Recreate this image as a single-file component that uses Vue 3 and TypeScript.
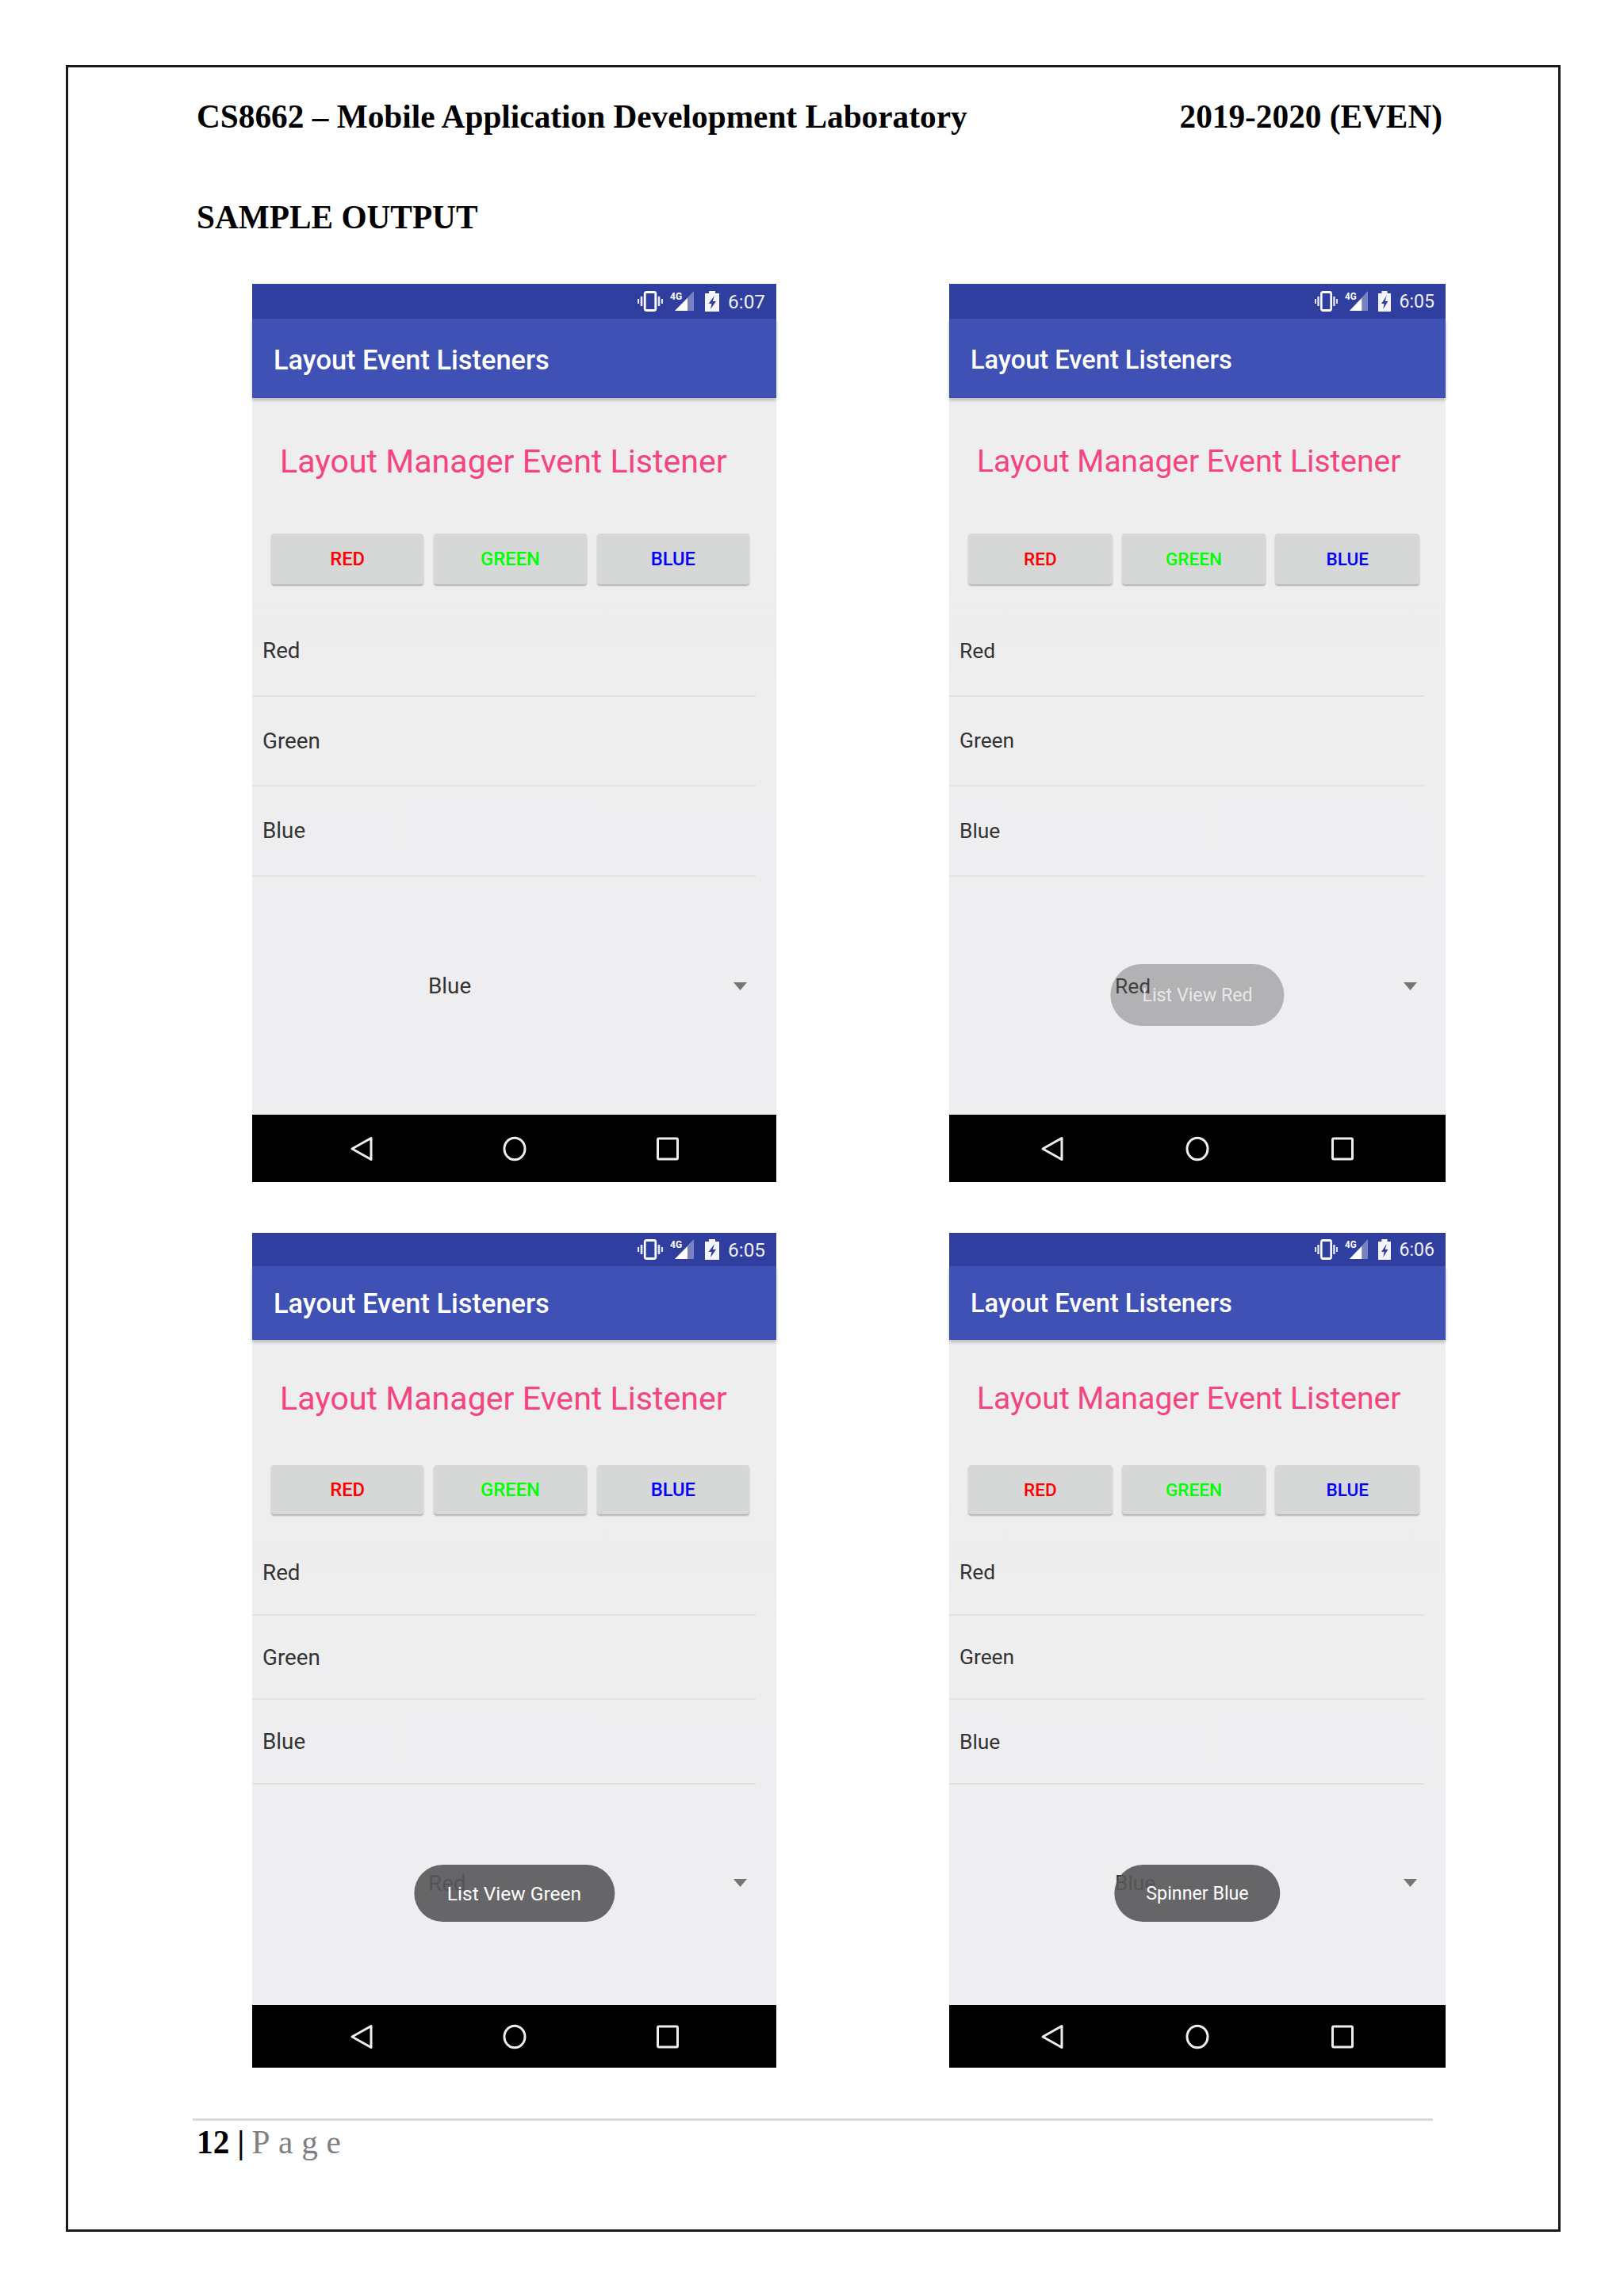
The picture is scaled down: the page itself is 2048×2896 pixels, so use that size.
<script setup lang="ts">
interface Phone {
  time: string
  wide: boolean
  tall: boolean
  spinner: string
  toast?: string
  fading?: boolean
}

const phones: Phone[] = [
  { time: '6:07', wide: true, tall: true, spinner: 'Blue' },
  { time: '6:05', wide: false, tall: true, spinner: 'Red', toast: 'List View Red', fading: true },
  { time: '6:05', wide: true, tall: false, spinner: 'Red', toast: 'List View Green' },
  { time: '6:06', wide: false, tall: false, spinner: 'Blue', toast: 'Spinner Blue' },
]
const items = ['Red', 'Green', 'Blue']
const buttons = [
  { label: 'RED', cls: 'red' },
  { label: 'GREEN', cls: 'green' },
  { label: 'BLUE', cls: 'blue' },
]
</script>

<template>
  <div class="page">
    <div class="frame">
      <header class="doc-head">
        <span>CS8662 – Mobile Application Development Laboratory</span>
        <span>2019-2020 (EVEN)</span>
      </header>
      <h2 class="sample">SAMPLE OUTPUT</h2>
      <div class="phones">
        <section
          v-for="(p, i) in phones"
          :key="i"
          class="phone"
          :class="[p.wide ? 'wide' : 'narrow', p.tall ? 'tall' : 'short']"
        >
          <div class="status">
            <svg class="ic-vib" viewBox="0 0 32 26" preserveAspectRatio="none">
              <rect x="9.2" y="1.5" width="13.6" height="23" rx="2" fill="none" stroke="#fff" stroke-width="2.8" />
              <path d="M5 7v12M27 7v12" stroke="#e8eaf6" stroke-width="2.6" fill="none" />
              <path d="M1 10v6M31 10v6" stroke="#e8eaf6" stroke-width="2.2" fill="none" />
            </svg>
            <svg class="ic-sig" viewBox="0 0 30 26" preserveAspectRatio="none">
              <polygon points="30,0 30,25 6,25" fill="#fff" fill-opacity="0.35" />
              <polygon points="6,25 22,9 22,25" fill="#fff" />
              <text x="0" y="11" class="four-g">4G</text>
            </svg>
            <svg class="ic-bat" viewBox="0 0 18 26" preserveAspectRatio="none">
              <path d="M5 0h8v3h5v23H0V3h5z" fill="#f4f5fb" />
              <path d="M12 6 4.5 16h4L7 23l7-10h-4.2z" fill="#303f9f" />
            </svg>
            <span class="time">{{ p.time }}</span>
          </div>
          <div class="appbar"><span class="title">Layout Event Listeners</span></div>
          <div class="content">
            <div class="heading"><span>Layout Manager Event Listener</span></div>
            <div class="btns">
              <button v-for="b in buttons" :key="b.label" class="btn" :class="b.cls">{{ b.label }}</button>
            </div>
            <ul class="list">
              <li v-for="it in items" :key="it" class="row"><span>{{ it }}</span></li>
            </ul>
            <div class="spinner">
              <span class="spin-text">{{ p.spinner }}</span>
              <svg class="arrow" viewBox="0 0 17 10" preserveAspectRatio="none">
                <polygon points="0,0 17,0 8.5,10" fill="#757575" />
              </svg>
            </div>
            <div v-if="p.toast" class="toast" :class="{ fading: p.fading }"><span>{{ p.toast }}</span></div>
          </div>
          <nav class="nav">
            <svg class="nav-ic" viewBox="0 0 30 32">
              <path d="M27 2.5v27L3 16z" fill="none" stroke="#eee" stroke-width="3" stroke-linejoin="round" />
            </svg>
            <svg class="nav-ic" viewBox="0 0 30 32">
              <ellipse cx="15" cy="16" rx="13" ry="13.8" fill="none" stroke="#eee" stroke-width="3" />
            </svg>
            <svg class="nav-ic" viewBox="0 0 30 32">
              <rect x="2.5" y="3" width="25" height="26" rx="1.5" fill="none" stroke="#eee" stroke-width="3" />
            </svg>
          </nav>
        </section>
      </div>
      <footer class="doc-foot">
        <b>12</b><b class="bar">|</b><span class="pg">Page</span>
      </footer>
    </div>
  </div>
</template>

<style scoped>
.page {
  width: 2048px;
  height: 2896px;
  box-sizing: border-box;
  padding: 82px 80px 0 83px;
  background: #fff;
  font-family: "Liberation Serif", serif;
  color: #000;
}
.frame {
  height: 2733px;
  box-sizing: border-box;
  border: 3px solid #1a1a1a;
  display: flex;
  flex-direction: column;
}
.doc-head {
  display: flex;
  justify-content: space-between;
  margin-top: 37px;
  padding: 0 146px 0 162px;
  font-weight: 700;
  font-size: 41.3px;
  line-height: 50px;
}
.sample {
  margin: 77px 0 0;
  padding-left: 162px;
  font-weight: 700;
  font-size: 41.3px;
  line-height: 50px;
}
.phones {
  display: grid;
  grid-template-columns: 661px 626px;
  column-gap: 218px;
  row-gap: 64px;
  margin: 59px 0 0 232px;
}
.phone {
  display: flex;
  flex-direction: column;
  font-family: Roboto, sans-serif;
  box-sizing: border-box;
}
.wide {
  --dp: 1.83px;
  --btn-pad-r: 34px;
  --btn-gap: 13px;
  --row-r: 26px;
  --spin-l: 222px;
  --arrow-r: 37px;
  --nav-gap: 163px;
  --head-l: 35px;
  --vib-w: 32px;
  --bat-w: 18px;
  --sig-w: 30px;
  --bat-gap: 14px;
  --toast-p: 42px;
}
.narrow {
  --dp: 1.735px;
  --btn-pad-r: 33px;
  --btn-gap: 12px;
  --row-r: 27px;
  --spin-l: 209px;
  --arrow-r: 36px;
  --nav-gap: 153px;
  --head-l: 35px;
  --vib-w: 29px;
  --bat-w: 16px;
  --sig-w: 29px;
  --bat-gap: 13px;
  --toast-p: 40px;
}
.tall {
  height: 1133px;
  --status-h: 44px;
  --app-h: 100px;
  --app-top: 4px;
  --nav-h: 85px;
  --head-h: 160px;
  --btn-top: 11px;
  --btn-h: 64px;
  --list-top: 28px;
  --row-h: 113.5px;
  --spin-h: 276px;
  --toast-h: 78px;
  --toast-b: 112px;
}
.short {
  height: 1053px;
  --status-h: 42px;
  --app-h: 93px;
  --app-top: 0px;
  --nav-h: 79px;
  --head-h: 148px;
  --btn-top: 10px;
  --btn-h: 62px;
  --list-top: 21px;
  --row-h: 106.7px;
  --spin-h: 248px;
  --toast-h: 72px;
  --toast-b: 105px;
}
.status {
  height: var(--status-h);
  flex: none;
  background: #303f9f;
  display: flex;
  align-items: center;
  justify-content: flex-end;
  padding-right: 14px;
  color: #eef0f8;
}
.status svg {
  height: 26px;
  flex: none;
}
.ic-vib {
  width: var(--vib-w);
  margin-right: 9px;
}
.ic-sig {
  width: var(--sig-w);
  margin-right: var(--bat-gap);
}
.ic-bat {
  width: var(--bat-w);
  margin-right: 11px;
}
.four-g {
  font-family: Roboto, sans-serif;
  font-size: 12px;
  font-weight: 700;
  fill: #fff;
}
.time {
  font-size: calc(var(--dp) * 13.3);
  line-height: 1;
  padding-top: 2px;
}
.appbar {
  height: var(--app-h);
  flex: none;
  box-sizing: border-box;
  background: #3f51b5;
  box-shadow: 0 3px 4px rgba(0, 0, 0, 0.22);
  display: flex;
  align-items: center;
  padding: var(--app-top) 0 0 27px;
  position: relative;
  z-index: 1;
}
.title {
  color: #fff;
  font-weight: 500;
  font-size: calc(var(--dp) * 18.8);
}
.content {
  flex: 1;
  min-height: 0;
  background: linear-gradient(#eeeeee, #eeedf0);
  position: relative;
  display: flex;
  flex-direction: column;
}
.heading {
  height: var(--head-h);
  flex: none;
  display: flex;
  align-items: center;
  padding-left: var(--head-l);
  color: #f5447f;
  font-size: calc(var(--dp) * 22.5);
  white-space: nowrap;
}
.btns {
  display: flex;
  gap: var(--btn-gap);
  margin-top: var(--btn-top);
  padding: 0 var(--btn-pad-r) 0 24px;
}
.btn {
  flex: 1;
  height: var(--btn-h);
  border: 0;
  border-radius: 4px;
  background: #d6d7d7;
  box-shadow: 0 2px 2px rgba(0, 0, 0, 0.25);
  font-family: Roboto, sans-serif;
  font-weight: 500;
  font-size: calc(var(--dp) * 13);
  padding: 0;
}
.red { color: #ff0000; }
.green { color: #00ff00; }
.blue { color: #0000ff; }
.list {
  list-style: none;
  margin: var(--list-top) 0 0;
  padding: 0;
}
.row {
  height: var(--row-h);
  box-sizing: border-box;
  display: flex;
  align-items: center;
  padding-left: 13px;
  margin-right: var(--row-r);
  border-bottom: 2px solid #e0e0e1;
  color: #333;
  font-size: calc(var(--dp) * 15.2);
}
.spinner {
  height: var(--spin-h);
  flex: none;
  display: flex;
  align-items: center;
  justify-content: space-between;
  padding: 0 var(--arrow-r) 0 var(--spin-l);
  color: #333;
  font-size: calc(var(--dp) * 15.2);
}
.arrow {
  width: 17px;
  height: 10px;
}
.toast {
  position: absolute;
  left: 50%;
  bottom: var(--toast-b);
  transform: translateX(-50%);
  height: var(--toast-h);
  padding: 0 var(--toast-p);
  border-radius: 40px;
  display: flex;
  align-items: center;
  white-space: nowrap;
  background: rgba(88, 88, 90, 0.91);
  color: #fff;
  font-size: calc(var(--dp) * 13.4);
}
.toast.fading {
  background: rgba(88, 88, 90, 0.4);
  color: rgba(255, 255, 255, 0.72);
}
.nav {
  height: var(--nav-h);
  flex: none;
  background: #000;
  display: flex;
  align-items: center;
  justify-content: center;
  gap: var(--nav-gap);
}
.nav-ic {
  width: 30px;
  height: 32px;
}
.doc-foot {
  margin: 64px 0 0 157px;
  width: 1559px;
  border-top: 3px solid #d9d9d9;
  padding: 2px 0 0 5px;
  font-size: 41.3px;
  line-height: 50px;
  display: flex;
  align-items: baseline;
}
.bar {
  margin: 0 9px 0 10px;
}
.pg {
  color: #808080;
  letter-spacing: 0.26em;
}
</style>
